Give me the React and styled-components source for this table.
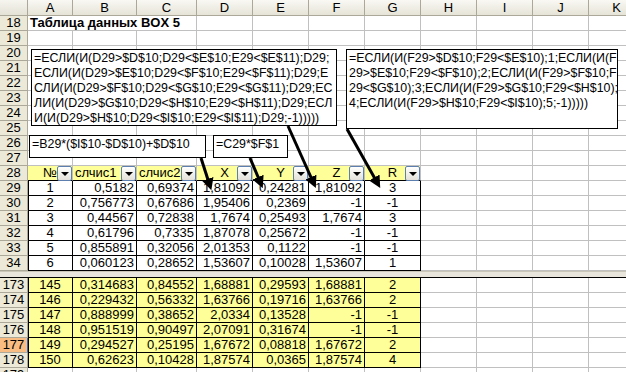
import React from "react";
import styled, { createGlobalStyle, css } from "styled-components";

const GlobalStyle = createGlobalStyle`
  html, body {
    margin: 0;
    padding: 0;
    background: #fff;
  }
  body {
    font-family: "Liberation Sans", Arial, sans-serif;
    font-size: 13px;
    color: #000;
  }
`;

const COLS = ["A", "B", "C", "D", "E", "F", "G", "H", "I", "J", "K"];
const WIDTHS = [28, 45, 64, 60, 56, 56, 56, 56, 56, 56, 56, 56];
const TEMPLATE = WIDTHS.map((w) => w + "px").join(" ");
const YELLOW = "#ffff99";

const Page = styled.div`
  position: relative;
  width: 626px;
  height: 372px;
  overflow: hidden;
`;

const Sheet = styled.div`
  display: flex;
  flex-direction: column;
`;

const Row = styled.div`
  display: grid;
  grid-template-columns: ${TEMPLATE};
  height: ${(p) => p.$h || 15}px;
`;

const Corner = styled.div`
  box-sizing: border-box;
  background: linear-gradient(#f6f5ef, #e4e2d6);
  border-right: 1px solid #aca899;
  border-bottom: 1px solid #aca899;
`;

const ColHead = styled.div`
  box-sizing: border-box;
  background: linear-gradient(#f9f8f3, #e6e4d8);
  border-right: 1px solid #aca899;
  border-bottom: 1px solid #aca899;
  text-align: center;
  line-height: 15px;
`;

const RowHead = styled.div`
  box-sizing: border-box;
  background: ${(p) => (p.$active ? "#f9bd84" : "#ece9d8")};
  border-right: 1px solid ${(p) => (p.$active ? "#316ac5" : "#aca899")};
  border-bottom: 1px solid #aca899;
  text-align: center;
  line-height: 14px;
`;

const Cell = styled.div`
  position: relative;
  box-sizing: border-box;
  padding: 0 2px;
  line-height: 14px;
  white-space: nowrap;
  background: ${(p) => p.$fill || "#fff"};
  border-right: 1px solid ${(p) => (p.$boxed ? "#000" : "#c0c0c0")};
  border-bottom: 1px solid ${(p) => (p.$boxed || p.$under ? "#000" : "#c0c0c0")};
  text-align: ${(p) => p.$align || "left"};
  font-weight: ${(p) => (p.$bold ? 700 : 400)};
  ${(p) => p.$span && css`grid-column: span ${p.$span};`}
  ${(p) => p.$edge && css`box-shadow: inset 1px 0 #000;`}
`;

const FilterButton = styled.span`
  position: absolute;
  right: 0;
  bottom: -1px;
  width: 15px;
  height: 15px;
  box-sizing: border-box;
  border: 1px solid #5c7fb0;
  border-radius: 2px;
  background: linear-gradient(#ffffff, #e3e1d8);
  &::after {
    content: "";
    position: absolute;
    left: 3px;
    top: 5px;
    border-left: 4px solid transparent;
    border-right: 4px solid transparent;
    border-top: 4px solid #000;
  }
`;

const SplitBar = styled.div`
  height: 7px;
  box-sizing: border-box;
  background: #e8e6dc;
  border-top: 1px solid #c9c6b8;
  border-bottom: 1px solid #000;
`;

const Note = styled.div`
  position: absolute;
  left: ${(p) => p.$x}px;
  top: ${(p) => p.$y}px;
  width: ${(p) => p.$w}px;
  height: ${(p) => p.$h}px;
  box-sizing: border-box;
  border: 1px solid #000;
  background: #fff;
  padding: 1px 1px 0 2px;
  font-size: 12.4px;
  line-height: 15px;
  overflow: hidden;
`;

const NoteLine = styled.div`
  white-space: nowrap;
`;

const Arrows = styled.svg`
  position: absolute;
  left: 0;
  top: 0;
  pointer-events: none;
`;

const upper = [
  ["1", "0,5182", "0,69374", "1,81092", "0,24281", "1,81092", "3"],
  ["2", "0,756773", "0,67686", "1,95406", "0,2369", "-1", "-1"],
  ["3", "0,44567", "0,72838", "1,7674", "0,25493", "1,7674", "3"],
  ["4", "0,61796", "0,7335", "1,87078", "0,25672", "-1", "-1"],
  ["5", "0,855891", "0,32056", "2,01353", "0,1122", "-1", "-1"],
  ["6", "0,060123", "0,28652", "1,53607", "0,10028", "1,53607", "1"],
];

const lower = [
  ["145", "0,314683", "0,84552", "1,68881", "0,29593", "1,68881", "2"],
  ["146", "0,229432", "0,56332", "1,63766", "0,19716", "1,63766", "2"],
  ["147", "0,888999", "0,38652", "2,0334", "0,13528", "-1", "-1"],
  ["148", "0,951519", "0,90497", "2,07091", "0,31674", "-1", "-1"],
  ["149", "0,294527", "0,25195", "1,67672", "0,08818", "1,67672", "2"],
  ["150", "0,62623", "0,10428", "1,87574", "0,0365", "1,87574", "4"],
];

const headers = [
  ["№", "center"],
  ["слчис1", "left"],
  ["слчис2", "left"],
  ["X", "center"],
  ["Y", "center"],
  ["Z", "center"],
  ["R", "center"],
];

const alignOf = (i) => (i === 0 || i === 6 ? "center" : "right");

function Blank({ n, count = 11 }) {
  return (
    <>
      <RowHead>{n}</RowHead>
      {Array.from({ length: count }, (_, i) => (
        <Cell key={i} />
      ))}
    </>
  );
}

function DataRow({ n, values, fill, active }) {
  return (
    <Row>
      <RowHead $active={active}>{n}</RowHead>
      {values.map((v, i) => (
        <Cell key={i} $boxed $fill={fill} $edge={i === 0} $align={alignOf(i)}>
          {v}
        </Cell>
      ))}
      {COLS.slice(7).map((c) => (
        <Cell key={c} />
      ))}
    </Row>
  );
}

export default function App() {
  return (
    <Page>
      <GlobalStyle />
      <Sheet>
        <Row $h={16}>
          <Corner />
          {COLS.map((c) => (
            <ColHead key={c}>{c}</ColHead>
          ))}
        </Row>
        <Row>
          <RowHead>18</RowHead>
          <Cell $span={3} $bold>
            Таблица данных BOX 5
          </Cell>
          {COLS.slice(3).map((c) => (
            <Cell key={c} />
          ))}
        </Row>
        {[19, 20, 21, 22, 23, 24, 25, 26, 27].map((n) => (
          <Row key={n}>
            <Blank n={n} />
          </Row>
        ))}
        <Row>
          <RowHead>28</RowHead>
          {headers.map(([t, a]) => (
            <Cell key={t} $fill={YELLOW} $under $align={a}>
              {t}
              <FilterButton />
            </Cell>
          ))}
          {COLS.slice(7).map((c) => (
            <Cell key={c} />
          ))}
        </Row>
        {upper.map((v, i) => (
          <DataRow key={i} n={29 + i} values={v} />
        ))}
        <SplitBar />
        {lower.map((v, i) => (
          <DataRow key={i} n={173 + i} values={v} fill={YELLOW} active={173 + i === 177} />
        ))}
        <Row>
          <Blank n={179} />
        </Row>
      </Sheet>

      <Note $x={31} $y={49} $w={306} $h={77}>
        <NoteLine>=ЕСЛИ(И(D29&gt;$D$10;D29&lt;$E$10;E29&lt;$E$11);D29;</NoteLine>
        <NoteLine>ЕСЛИ(И(D29&gt;$E$10;D29&lt;$F$10;E29&lt;$F$11);D29;E</NoteLine>
        <NoteLine>СЛИ(И(D29&gt;$F$10;D29&lt;$G$10;E29&lt;$G$11);D29;EC</NoteLine>
        <NoteLine>ЛИ(И(D29&gt;$G$10;D29&lt;$H$10;E29&lt;$H$11);D29;ЕСЛ</NoteLine>
        <NoteLine>И(И(D29&gt;$H$10;D29&lt;$I$10;E29&lt;$I$11);D29;-1)))))</NoteLine>
      </Note>
      <Note $x={346} $y={49} $w={272} $h={80}>
        <NoteLine>=ЕСЛИ(И(F29&gt;$D$10;F29&lt;$E$10);1;ЕСЛИ(И(F</NoteLine>
        <NoteLine>29&gt;$E$10;F29&lt;$F$10);2;ЕСЛИ(И(F29&gt;$F$10;F</NoteLine>
        <NoteLine>29&lt;$G$10);3;ЕСЛИ(И(F29&gt;$G$10;F29&lt;$H$10);</NoteLine>
        <NoteLine>4;ЕСЛИ(И(F29&gt;$H$10;F29&lt;$I$10);5;-1)))))</NoteLine>
      </Note>
      <Note $x={29} $y={135} $w={177} $h={23}>
        <NoteLine>=B29*($I$10-$D$10)+$D$10</NoteLine>
      </Note>
      <Note $x={213} $y={135} $w={75} $h={23}>
        <NoteLine>=C29*$F$1</NoteLine>
      </Note>

      <Arrows width="626" height="372" viewBox="0 0 626 372">
        <defs>
          <marker id="head" markerWidth="4" markerHeight="4" refX="2.5" refY="2" orient="auto" markerUnits="strokeWidth">
            <path d="M0,0 L4,2 L0,4 Z" fill="#000" />
          </marker>
        </defs>
        <g stroke="#000" strokeWidth="3" markerEnd="url(#head)">
          <line x1="288" y1="126" x2="314" y2="184" />
          <line x1="347" y1="129" x2="378" y2="184" />
          <line x1="201" y1="158" x2="210" y2="186" />
          <line x1="250" y1="158" x2="261" y2="184" />
        </g>
      </Arrows>
    </Page>
  );
}
